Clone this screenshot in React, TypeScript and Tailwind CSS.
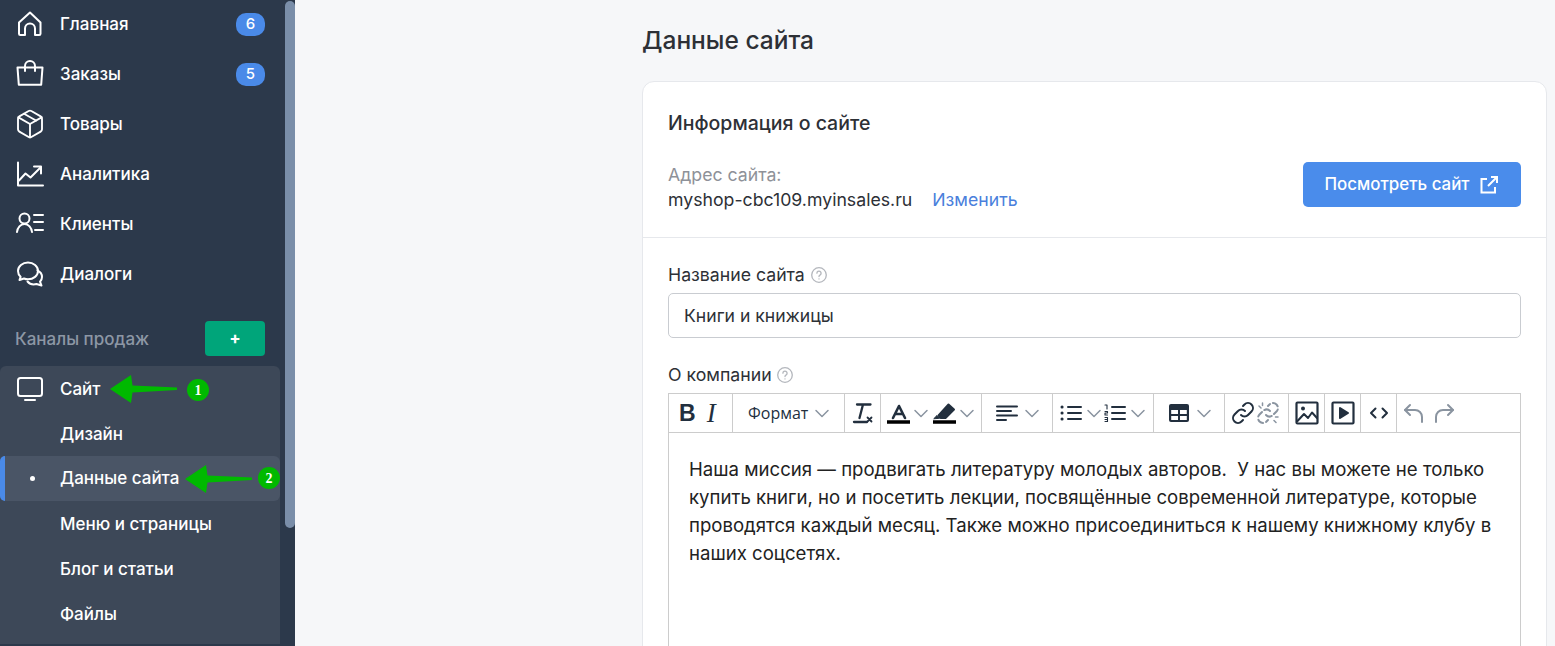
import { Package } from 'lucide-react';
import type { ReactNode } from 'react';

const Ico = ({ children, size = 28, box = 28, sw = 2 }: { children: ReactNode; size?: number; box?: number; sw?: number }) => (
    <svg width={size} height={size} viewBox={`0 0 ${box} ${box}`} fill="none" stroke="currentColor" strokeWidth={sw} strokeLinecap="round" strokeLinejoin="round">
        {children}
    </svg>
);

const navItems: { label: string; badge?: string; icon: ReactNode }[] = [
    {
        label: 'Главная',
        badge: '6',
        icon: (
            <Ico>
                <path d="M3 12.5 14 2.5l10.5 10v11.2a1.3 1.3 0 0 1-1.3 1.3H19v-6.5a5 5 0 0 0-10 0V25H4.3A1.3 1.3 0 0 1 3 23.7z" />
            </Ico>
        ),
    },
    {
        label: 'Заказы',
        badge: '5',
        icon: (
            <Ico>
                <path d="M1.500 7.500h25l-1.300 17.300H2.800z" />
                <path d="M9 11V6a5 5 0 0 1 10 0v5" />
            </Ico>
        ),
    },
    { label: 'Товары', icon: <Package size={32} strokeWidth={1.4} /> },
    {
        label: 'Аналитика',
        icon: (
            <Ico>
                <path d="M2 2.500v23h25" />
                <path d="M3 20.500l6.500-7 5 4L24.500 7.500" />
                <path d="M18 6.500h7v7" />
            </Ico>
        ),
    },
    {
        label: 'Клиенты',
        icon: (
            <Ico size={30} box={30}>
                <circle cx="9.500" cy="9.500" r="5" />
                <path d="M2 23c.5-4.500 3.500-8 7.500-8s7 3.500 7.500 8" />
                <path d="M19 6h9M19 13h9M20 21h8" />
            </Ico>
        ),
    },
    {
        label: 'Диалоги',
        icon: (
            <Ico>
                <path d="M12 2.500c-5.500 0-10 3.700-10 8.500 0 2.300 1 4.300 2.600 5.800L3.500 20l4.500-1.500c1.200.5 2.600.8 4 .8 5.500 0 10-3.700 10-8.300S17.500 2.500 12 2.500z" />
                <path d="M21.500 10.500c2.700 1.300 4.500 3.700 4.500 6.500 0 1.800-.7 3.400-2 4.700l1.500 3.800-5-1.500c-3.500.9-7-.1-9-2.500" />
            </Ico>
        ),
    },
];

const NavRow = ({ label, badge, icon }: { label: string; badge?: string; icon?: ReactNode }) => (
    <div className="flex h-[50px] items-center pr-[20px] text-white">
        <div className="flex w-[60px] justify-center pr-[1px]">{icon}</div>
        <span className="flex-1 text-[17px] font-medium leading-none">{label}</span>
        {badge && (
            <span className="flex h-[23px] w-[29px] items-center justify-center rounded-[10px] bg-[#4a8ae8] text-[15px] font-medium">{badge}</span>
        )}
    </div>
);

const SubRow = ({ label, active }: { label: string; active?: boolean }) => (
    <div className={`relative flex h-[45px] items-center rounded-[6px] text-white ${active ? 'bg-[#4a5566]' : 'pt-[2px]'}`}>
        {active && <span className="absolute bottom-0 left-0 top-0 w-[5px] rounded-l-[6px] bg-[#4a8ae8]" />}
        <div className="flex w-[60px] justify-center">
            {active && <span className="mr-[-5px] h-[5px] w-[5px] rounded-full bg-white" />}
        </div>
        <span className="text-[17px] font-medium leading-none">{label}</span>
    </div>
);

const Arrow = ({ className }: { className: string }) => (
    <svg className={className} width="67" height="28" viewBox="0 0 67 28" fill="#00b900">
        <path d="M0 14 21 0l1.500 10.500 44.500 2v2.500l-44.500 2.500L21 28z" />
    </svg>
);

const Step = ({ n, className }: { n: string; className: string }) => (
    <span className={`absolute flex h-[22px] w-[22px] items-center justify-center rounded-full bg-[#00b900] font-['Liberation_Serif',serif] text-[14px] font-bold text-white ${className}`}>{n}</span>
);

const Sidebar = () => (
    <aside className="flex h-[646px] w-[295px] shrink-0 overflow-hidden bg-[#2c394b]">
        <div className="relative w-[285px] shrink-0">
            <div className="mt-[-1px]">
                {navItems.map((item) => (
                    <NavRow key={item.label} {...item} />
                ))}
            </div>
            <div className="mt-[22px] flex h-[35px] items-center justify-between pl-[15px] pr-[20px]">
                <span className="pt-[2px] text-[17px] font-medium text-[#8d97a5]">Каналы продаж</span>
                <span className="flex h-[35px] w-[60px] items-center justify-center rounded-[4px] bg-[#00a57a] text-[17px] font-bold leading-none text-white">+</span>
            </div>
            <div className="mt-[10px] h-[279px] w-[280px] rounded-t-[6px] border-b border-[#2c394b] bg-[#3d4858]">
                <div className="flex h-[45px] items-center pt-[1px] text-white">
                    <div className="flex w-[60px] justify-center pr-[1px]">
                        <Ico>
                            <rect x="2" y="3" width="24" height="18" rx="2.500" />
                            <path d="M9 25h10" />
                        </Ico>
                    </div>
                    <span className="text-[17px] font-medium leading-none">Сайт</span>
                </div>
                <SubRow label="Дизайн" />
                <SubRow label="Данные сайта" active />
                <SubRow label="Меню и страницы" />
                <SubRow label="Блог и статьи" />
                <SubRow label="Файлы" />
            </div>
            <Arrow className="absolute left-[110px] top-[375px]" />
            <Step n="1" className="left-[187px] top-[379px]" />
            <Arrow className="absolute left-[185px] top-[465px]" />
            <Step n="2" className="left-[258px] top-[467px]" />
        </div>
        <div className="h-[646px] w-[10px] shrink-0">
            <div className="mt-[1px] h-[527px] w-[10px] rounded-[5px] bg-[#7a8ea9]" />
        </div>
    </aside>
);

const Help = () => (
    <svg className="text-[#b4b7bd]" width="18" height="18" viewBox="0 0 18 18" fill="none" stroke="currentColor" strokeWidth="1.300" strokeLinecap="round">
        <circle cx="9" cy="9" r="7.300" />
        <path d="M6.900 7.200a2.100 2.100 0 1 1 3.300 1.700c-.8.500-1.200.9-1.200 1.700" />
        <path d="M9 12.800v.1" />
    </svg>
);

const Caret = () => (
    <svg className="shrink-0 text-[#8a94a0]" width="22" height="24" viewBox="0 0 22 24" fill="none" stroke="currentColor" strokeWidth="1.500" strokeLinecap="round" strokeLinejoin="round">
        <path d="M5 9.500l6 6 6-6" />
    </svg>
);

const Cell = ({ w, children, cls = 'justify-center gap-[3px]', last }: { w: string; children: ReactNode; cls?: string; last?: boolean }) => (
    <div className={`flex h-full shrink-0 items-center ${cls} ${w} ${last ? '' : 'border-r border-[#ccc]'}`}>{children}</div>
);

const T = ({ children, w = 24, dim }: { children: ReactNode; w?: number; dim?: boolean }) => (
    <svg className={`shrink-0 ${dim ? 'text-[#8a94a0]' : 'text-[#222f3e]'}`} width={w} height="24" viewBox={`0 0 ${w} 24`} fill="none" stroke="currentColor" strokeWidth="2" strokeLinecap="round" strokeLinejoin="round">
        {children}
    </svg>
);

const Toolbar = () => (
    <div className="flex h-[40px] border border-[#ccc] bg-white">
        <Cell w="w-[64px]" cls="justify-start gap-[11px] pl-[10px]">
            <span className="font-['Liberation_Sans',sans-serif] text-[23px] font-bold leading-none text-[#222f3e]">B</span>
            <span className="font-['Liberation_Serif',serif] text-[27px] italic leading-none text-[#222f3e]">I</span>
        </Cell>
        <Cell w="w-[112px]" cls="justify-start gap-[3px] pl-[15px]">
            <span className="font-['Open_Sans',sans-serif] text-[16px] text-[#222f3e]">Формат</span>
            <Caret />
        </Cell>
        <Cell w="w-[36px]">
            <T>
                <path d="M6 3.500h13.500M12 3.500 8.500 17" strokeWidth="2.300" />
                <path d="M3 21h13" strokeWidth="2.300" />
                <path d="M16.500 16.500l4 4M20.500 16.500l-4 4" strokeWidth="1.800" />
            </T>
        </Cell>
        <Cell w="w-[101px]" cls="justify-start pl-[5px]">
            <T>
                <path d="M7 17 13 5l6 12M9 13h8" strokeWidth="2.600" />
                <path d="M1 21h23" strokeWidth="3.500" stroke="#000" strokeLinecap="butt" />
            </T>
            <Caret />
            <T>
                <path d="M16.500 3.500 22 8.500 13.500 17H8.500L6.500 14.500z" fill="currentColor" />
                <path d="M2 17.500l3-3 2.500 2.500z" fill="currentColor" strokeWidth="1" />
                <path d="M1 21h23" strokeWidth="3.500" stroke="#000" strokeLinecap="butt" />
            </T>
            <Caret />
        </Cell>
        <Cell w="w-[71px]" cls="justify-start gap-[2px] pl-[13px]">
            <T>
                <path d="M2 5.500h20M2 10h14M2 14.500h20M2 19h9" />
            </T>
            <Caret />
        </Cell>
        <Cell w="w-[101px]" cls="justify-start pl-[6px]">
            <T>
                <path d="M9 6h13M9 12h13M9 18h13" />
                <path d="M3 6h.1M3 12h.1M3 18h.1" strokeWidth="3" />
            </T>
            <Caret />
            <div className="ml-[-2px] flex">
                <T>
                    <path d="M9 6h13M9 12h13M9 18h13" />
                    <path d="M2 4h2v4M2 10.500h2.500v1.500h-2.500v2h2.500M2 16.500h2.500v4H2M2 18.500h2" strokeWidth="1.100" />
                </T>
            </div>
            <Caret />
        </Cell>
        <Cell w="w-[71px]" cls="justify-start gap-[2px] pl-[13px]">
            <T>
                <rect x="2" y="3" width="20" height="18" rx="2" fill="currentColor" stroke="none" />
                <rect x="4.200" y="9" width="6.800" height="4" fill="#fff" stroke="none" />
                <rect x="13" y="9" width="6.800" height="4" fill="#fff" stroke="none" />
                <rect x="4.200" y="15" width="6.800" height="4" fill="#fff" stroke="none" />
                <rect x="13" y="15" width="6.800" height="4" fill="#fff" stroke="none" />
            </T>
            <Caret />
        </Cell>
        <Cell w="w-[64px]" cls="justify-start gap-[1px] pl-[6px]">
            <T>
                <path d="M10 14a4.800 4.800 0 0 0 7 0l3.500-3.500a4.900 4.900 0 0 0-7-7L12 5" />
                <path d="M14 10a4.800 4.800 0 0 0-7 0l-3.500 3.500a4.900 4.900 0 0 0 7 7L12 19" />
            </T>
            <T dim>
                <path d="M10 14a4.800 4.800 0 0 0 7 0l3.500-3.500a4.900 4.900 0 0 0-7-7L12 5" strokeDasharray="6 3" />
                <path d="M14 10a4.800 4.800 0 0 0-7 0l-3.500 3.500a4.900 4.900 0 0 0 7 7L12 19" strokeDasharray="6 3" />
                <path d="M3 5l2 2M6.500 2v2.500M18 19.500l2 2M22 16h-2.500" strokeWidth="1.500" />
            </T>
        </Cell>
        <Cell w="w-[36px]">
            <T>
                <rect x="1.500" y="1.500" width="21" height="21" rx="1" strokeWidth="2.200" />
                <circle cx="8" cy="7.500" r="2" fill="currentColor" stroke="none" />
                <path d="M2.500 20 9 13l4 4 4-5.500 5 5.500" />
            </T>
        </Cell>
        <Cell w="w-[36px]">
            <T>
                <rect x="1.500" y="1.500" width="21" height="21" rx="1" strokeWidth="2.200" />
                <path d="M9 7l8 5-8 5z" fill="currentColor" />
            </T>
        </Cell>
        <Cell w="w-[36px]">
            <T>
                <path d="M8.500 7.500 4 12l4.500 4.500M15.500 7.500 20 12l-4.500 4.500" />
            </T>
        </Cell>
        <div className="flex h-full flex-1 items-center gap-[6px] pl-[5px]">
            <T dim>
                <path d="M8 4 3 9l5 5" />
                <path d="M3 9h10a7 7 0 0 1 7 7v5" />
            </T>
            <T dim>
                <path d="M16 4l5 5-5 5" />
                <path d="M21 9H11a7 7 0 0 0-7 7v5" />
            </T>
        </div>
    </div>
);

export default function App() {
    return (
        <div className="flex h-[646px] w-[1555px] overflow-hidden bg-[#f6f7f9] font-['Inter',sans-serif]">
            <Sidebar />
            <main className="ml-[347px] w-[905px] shrink-0">
                <h1 className="mt-[24px] h-[32px] text-[24.500px] font-medium leading-[32px] text-[#2d3036]">Данные сайта</h1>
                <div className="mt-[25px] h-[600px] rounded-t-[12px] border border-[#e6e8ec] bg-white">
                    <div className="h-[156px] border-b border-[#e6e8ec] px-[25px] pt-[29px]">
                        <h2 className="h-[24px] text-[19.500px] font-medium leading-[24px] text-[#2d3036]">Информация о сайте</h2>
                        <div className="flex items-start justify-between">
                            <div className="pt-[28px] text-[17.700px]">
                                <div className="h-[24px] leading-[24px] text-[#8e9198]">Адрес сайта:</div>
                                <div className="flex h-[26px] items-center text-[#2d3036]">
                                    <span>myshop-cbc109.myinsales.ru</span>
                                    <span className="ml-[20px] text-[#4a7fdc]">Изменить</span>
                                </div>
                            </div>
                            <button className="mt-[27px] flex h-[45px] w-[218px] items-center justify-center gap-[10px] rounded-[5px] bg-[#4a8ceb] pt-[1px] text-[16.900px] font-medium text-white">
                                Посмотреть сайт
                                <svg width="20" height="20" viewBox="0 0 20 20" fill="none" stroke="currentColor" strokeWidth="2" strokeLinejoin="miter">
                                    <path d="M8 4H2.500v13.500H16V12" />
                                    <path d="M9 11 18 2M12 2h6v6" />
                                </svg>
                            </button>
                        </div>
                    </div>
                    <div className="px-[25px] pt-[25px]">
                        <div className="flex h-[24px] items-center gap-[5px] text-[17.700px] text-[#2d3036]">
                            Название сайта
                            <Help />
                        </div>
                        <div className="mt-[6px] flex h-[45px] items-center rounded-[5px] border border-[#c9ccd1] px-[15px] pt-[2px] text-[17.600px] text-[#2d3036]">Книги и книжицы</div>
                        <div className="mt-[25px] flex h-[24px] items-center gap-[4px] text-[17.700px] text-[#2d3036]">
                            О компании
                            <Help />
                        </div>
                        <div className="mt-[6px]">
                            <Toolbar />
                            <div className="h-[300px] border-x border-[#ccc] px-[20px] pt-[22px] text-[18.600px] leading-[28px] text-[#222]">
                                Наша миссия — продвигать литературу молодых авторов.&nbsp; У нас вы можете не только<br />
                                купить книги, но и посетить лекции, посвящённые современной литературе, которые<br />
                                проводятся каждый месяц. Также можно присоединиться к нашему книжному клубу в<br />
                                наших соцсетях.
                            </div>
                        </div>
                    </div>
                </div>
            </main>
        </div>
    );
}
